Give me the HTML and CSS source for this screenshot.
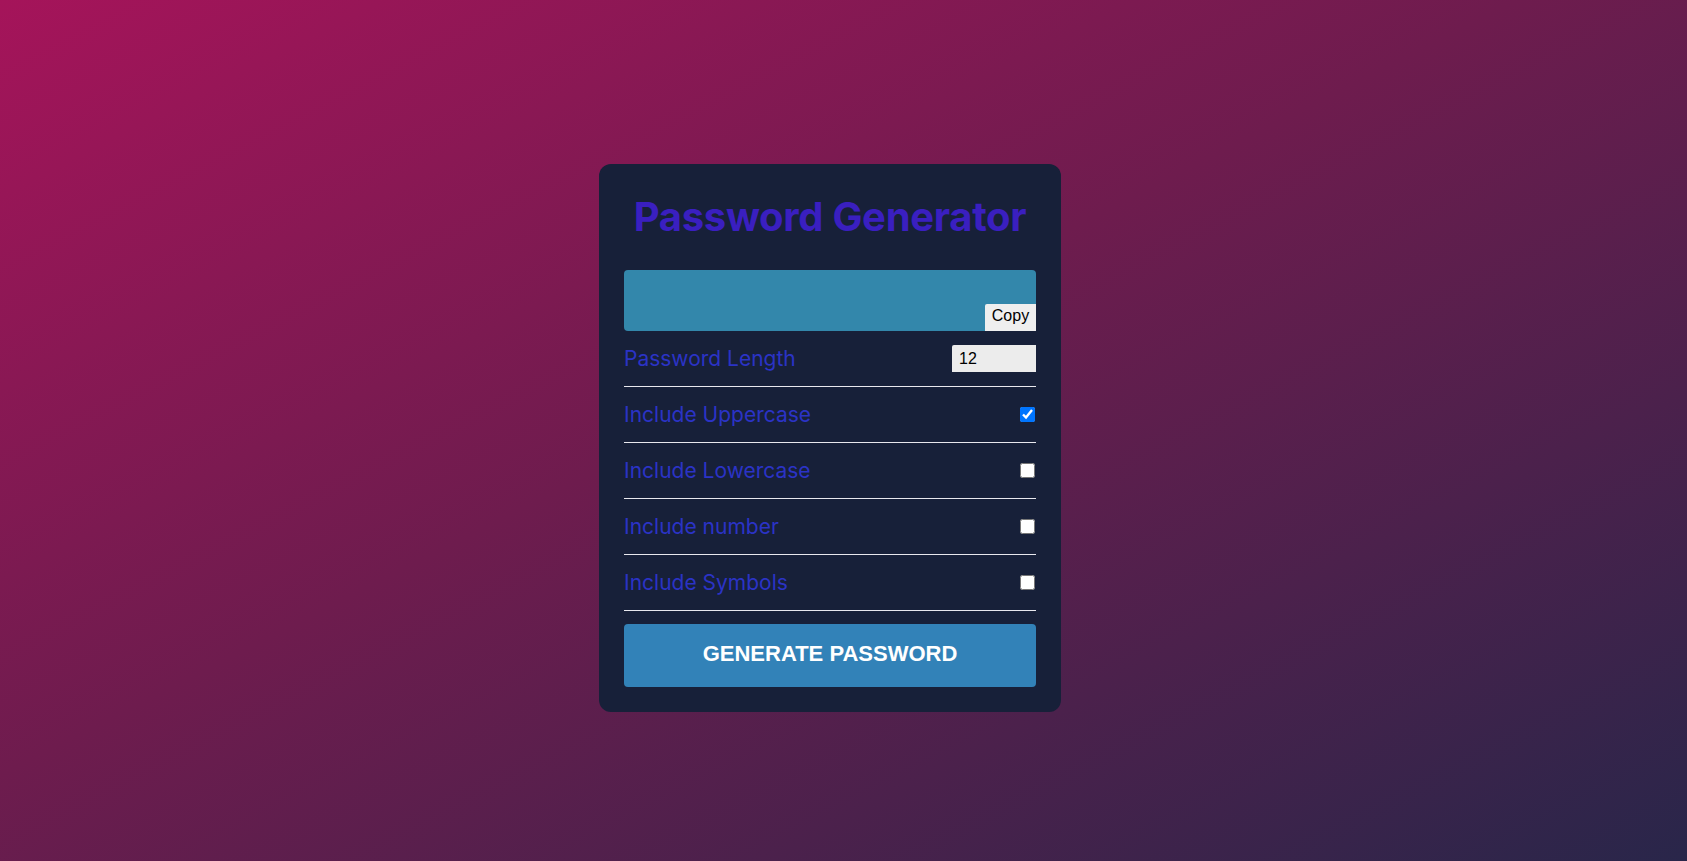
FILE: index.html
```html
<!DOCTYPE html>
<html lang="en">
<head>
<meta charset="UTF-8">
<title>Password Generator</title>
<link rel="stylesheet" href="styles.css">
</head>
<body>
<div class="card">
  <h1 class="title">Password Generator</h1>
  <div class="result">
    <span class="result-text"></span>
    <button class="copy-btn">Copy</button>
  </div>
  <div class="settings">
    <div class="setting">
      <label class="setting-label">Password Length</label>
      <input class="length-input" type="number" value="12">
    </div>
    <div class="setting">
      <label class="setting-label">Include Uppercase</label>
      <input class="check" type="checkbox" checked>
    </div>
    <div class="setting">
      <label class="setting-label">Include Lowercase</label>
      <input class="check" type="checkbox">
    </div>
    <div class="setting">
      <label class="setting-label">Include number</label>
      <input class="check" type="checkbox">
    </div>
    <div class="setting">
      <label class="setting-label">Include Symbols</label>
      <input class="check" type="checkbox">
    </div>
  </div>
  <button class="generate-btn">GENERATE PASSWORD</button>
</div>
</body>
</html>
```

FILE: styles.css
```css
* { box-sizing: border-box; }

html, body { height: 100%; }

body {
  margin: 0;
  padding: 15px 27px 0 0;
  background: linear-gradient(to bottom right, #a5145a 0%, #6e1c4e 45%, #29264a 100%);
  display: flex;
  align-items: center;
  justify-content: center;
  font-family: Inter, "Liberation Sans", sans-serif;
}

.card {
  width: 462px;
  padding: 25px;
  background: #172039;
  border-radius: 12px;
}

.title {
  margin: 4px 0 29px;
  height: 48px;
  line-height: 48px;
  font-size: 40px;
  font-weight: 700;
  text-align: center;
  color: #3a1fc0;
  letter-spacing: -0.3px;
}

.result {
  position: relative;
  height: 61px;
  background: #3387ab;
  border-radius: 4px;
}

.copy-btn {
  position: absolute;
  right: 0;
  bottom: 0;
  width: 51px;
  height: 27px;
  padding: 0 0 3px;
  border: none;
  border-radius: 2px 0 0 0;
  background: #efefef;
  color: #000;
  font-family: "Liberation Sans", Arial, sans-serif;
  font-size: 16px;
}

.settings { display: flex; flex-direction: column; }

.setting {
  display: flex;
  justify-content: space-between;
  align-items: center;
  height: 56px;
  border-bottom: 1px solid #e8e8ee;
}

.setting-label {
  font-size: 21px;
  color: #2b33c6;
}

.length-input {
  width: 84px;
  height: 27px;
  padding: 0 7px;
  border: none;
  border-radius: 2px 0 0 0;
  background: #ececec;
  color: #000;
  font-family: "Liberation Sans", Arial, sans-serif;
  font-size: 16px;
  outline: none;
}

.length-input::-webkit-inner-spin-button,
.length-input::-webkit-outer-spin-button { -webkit-appearance: none; margin: 0; }

.check {
  width: 15px;
  height: 15px;
  margin: 0 1px 0 0;
}

.generate-btn {
  display: block;
  width: 100%;
  height: 63px;
  margin-top: 13px;
  padding: 0 0 4px;
  border: none;
  border-radius: 4px;
  background: #3282b8;
  color: #fff;
  font-family: "Liberation Sans", Arial, sans-serif;
  font-size: 22px;
  font-weight: 700;
}
```
